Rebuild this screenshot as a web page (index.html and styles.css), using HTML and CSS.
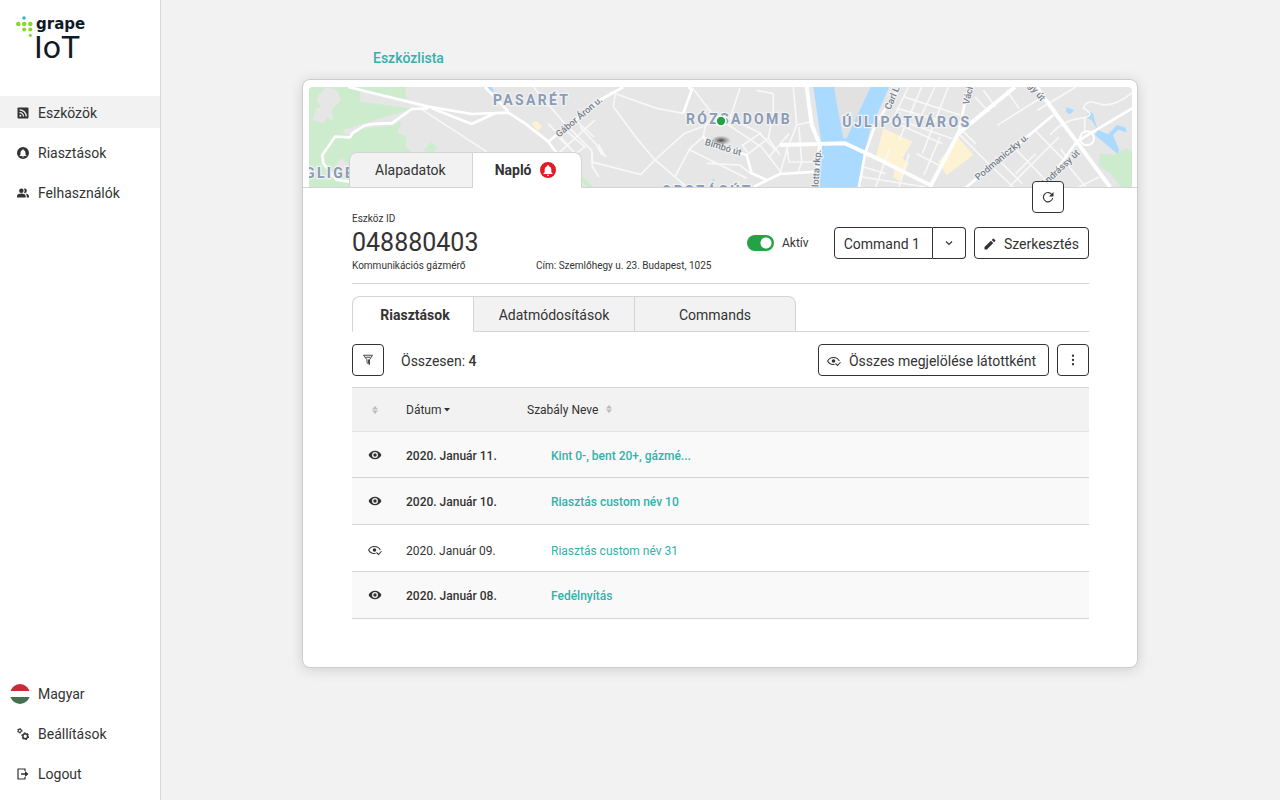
FILE: index.html
```html
<!DOCTYPE html>
<html lang="hu">
<head>
    <meta charset="UTF-8">
    <meta name="viewport" content="width=device-width, initial-scale=1.0">
    <title>Grape IoT - Napló</title>
    <link rel="stylesheet" href="styles.css">
</head>
<body>
    <svg class="sprite" aria-hidden="true">
        <symbol id="i-eye" viewBox="-1 3 26 18">
            <path fill-rule="evenodd" d="M12 4C6.500 4 2 7.500 0 12c2 4.500 6.500 8 12 8s10-3.500 12-8c-2-4.500-6.500-8-12-8zm0 13.500a5.500 5.500 0 1 1 0-11 5.500 5.500 0 0 1 0 11zm0-8.700a3.200 3.200 0 1 0 0 6.400 3.200 3.200 0 0 0 0-6.400z"/>
        </symbol>
        <symbol id="i-seen" viewBox="0 0 28 24">
            <path d="M15 18.500c-1 .3-2 .4-3 .4-4.500 0-8.500-2.600-10.700-6.900C3.500 7.700 7.500 5 13 5s9.500 2.700 11.700 7" fill="none" stroke="currentColor" stroke-width="2.200"/>
            <circle cx="13" cy="12" r="3.600"/>
            <path d="M17 17l4 4 6-6.500" fill="none" stroke="currentColor" stroke-width="2.200"/>
        </symbol>
        <symbol id="i-bell" viewBox="0 0 24 24">
            <path fill-rule="evenodd" d="M12 0a12 12 0 1 0 0 24 12 12 0 0 0 0-24zm0 4.500c.8 0 1.400.6 1.400 1.400v.4c2.200.6 3.600 2.600 3.600 5v4l1.800 1.800v.9H5.200v-.9L7 15.300v-4c0-2.400 1.400-4.400 3.600-5v-.4c0-.8.6-1.400 1.400-1.400zm-1.800 14.500h3.600a1.800 1.800 0 0 1-3.600 0z"/>
        </symbol>
        <symbol id="i-sort" viewBox="0 0 8 10">
            <path d="M4 1l3 3.500H1zM4 9L1 5.500h6z"/>
        </symbol>
    </svg>

    <div class="layout">
        <aside class="sidebar">
            <svg class="logo" viewBox="0 0 72 46" role="img" aria-label="grape IoT">
                <circle cx="8" cy="2" r="1.800" fill="#2dbdb6"/>
                <g fill="#8bd52f">
                    <circle cx="2.300" cy="8" r="2.300"/>
                    <circle cx="8.200" cy="8" r="2.300"/>
                    <circle cx="14.300" cy="8" r="2.300"/>
                    <circle cx="8.200" cy="13.500" r="2"/>
                    <circle cx="14.300" cy="13.500" r="2"/>
                    <circle cx="14.300" cy="19.300" r="1.600"/>
                </g>
                <text class="logo-grape" x="20" y="13">grape</text>
                <text class="logo-iot" x="18" y="42">IoT</text>
            </svg>

            <nav class="menu">
                <a href="#" class="menu-item active">
                    <svg class="menu-icon" viewBox="0 0 24 24"><path d="M3 1h18a2 2 0 0 1 2 2v18a2 2 0 0 1-2 2H3a2 2 0 0 1-2-2V3a2 2 0 0 1 2-2z"/><g fill="none" stroke="#f2f2f2" stroke-width="2.500"><path d="M5 5.500A13.500 13.500 0 0 1 18.500 19M5 11a8 8 0 0 1 8 8"/></g><circle cx="6.800" cy="17.300" r="2" fill="#f2f2f2"/></svg>
                    Eszközök
                </a>
                <a href="#" class="menu-item">
                    <svg class="menu-icon"><use href="#i-bell"/></svg>
                    Riasztások
                </a>
                <a href="#" class="menu-item">
                    <svg class="menu-icon" viewBox="0 0 24 24"><path d="M16.700 13.100c1.600 1.100 2.800 2.600 2.800 4.600V21H24v-3.300c0-2.700-4.300-4.200-7.300-4.600z"/><circle cx="8.700" cy="7.500" r="4.500"/><path d="M15.200 12a4.500 4.500 0 0 0 0-9c-.5 0-1 .1-1.500.3 1 1.200 1.500 2.600 1.500 4.200s-.5 3-1.500 4.200c.5.2 1 .3 1.500.3z"/><path d="M8.700 13C5.500 13 0 14.600 0 17.800V21h17.400v-3.200C17.400 14.600 11.900 13 8.700 13z"/></svg>
                    Felhasználók
                </a>
            </nav>

            <nav class="menu menu-bottom">
                <a href="#" class="menu-item">
                    <svg class="flag" viewBox="0 0 20 20"><clipPath id="round"><circle cx="10" cy="10" r="10"/></clipPath><g clip-path="url(#round)"><path fill="#fff" d="M0 0h20v20H0z"/><path fill="#ce2939" d="M0 0h20v7H0z"/><path fill="#477050" d="M0 13h20v7H0z"/></g></svg>
                    Magyar
                </a>
                <a href="#" class="menu-item">
                    <svg class="menu-icon" viewBox="0 0 24 24"><g fill="none" stroke="currentColor"><circle cx="5.500" cy="5.500" r="3.200" stroke-width="2.200"/><circle cx="5.500" cy="5.500" r="4.800" stroke-width="1.400" stroke-dasharray="2.500 2.500"/><circle cx="16.500" cy="16.500" r="4.800" stroke-width="3"/><circle cx="16.500" cy="16.500" r="7" stroke-width="2" stroke-dasharray="3.700 3.600"/></g></svg>
                    Beállítások
                </a>
                <a href="#" class="menu-item">
                    <svg class="menu-icon" viewBox="0 0 24 24"><path d="M16 6V2H2v20h14v-4" fill="none" stroke="currentColor" stroke-width="2.400"/><path d="M8 10.500h8V6l7 6-7 6v-4.500H8z"/></svg>
                    Logout
                </a>
            </nav>
        </aside>

        <main class="content">
            <div class="page">
                <a href="#" class="back-link">Eszközlista</a>

                <section class="card">
                    <header class="card-header">
                        <svg class="map" viewBox="0 0 2469 300" preserveAspectRatio="xMidYMid slice" role="img" aria-label="Térkép">
                            <defs>
                                <radialGradient id="pin-shadow">
                                    <stop offset="0" stop-color="#333" stop-opacity=".9"/>
                                    <stop offset="1" stop-color="#666" stop-opacity="0"/>
                                </radialGradient>
                            </defs>
                            <rect width="2469" height="300" fill="#e6e6e6"/>

                            <!-- parks -->
                            <g fill="#cdeccd">
                                <path d="M0 0H290V52L305 64 260 95 278 112 265 135 293 150 288 180 310 195V300H0z"/>
                                <path d="M343 189L366 166 386 184 363 204z"/>
                                <path d="M813 262L853 300H835L813 282z"/>
                                <path d="M2373 199L2413 204 2453 184 2469 194V300H2435L2403 259 2370 238z"/>
                            </g>
                            <g fill="#e6e6e6">
                                <path d="M154 9L290 39 303 64 154 44z"/>
                                <path d="M103 129L198 99 298 69 258 115 158 125 130 145 105 140z"/>
                                <path d="M28 24L53 1 83 9 96 39 68 69 73 99 53 94 43 109 10 99 23 64 36 59 23 39z"/>
                                <path d="M76 239L98 214 120 234V260H80z"/>
                            </g>
                            <g fill="#fdf3d3">
                                <path d="M668 109L683 102 700 119 686 131z"/>
                                <path d="M1948 152L1993 204 1913 264 1888 224z"/>
                                <path d="M1723 124L1810 164 1780 214 1800 230 1770 282 1753 270 1758 240 1700 214z"/>
                            </g>

                            <!-- water -->
                            <g fill="#aadaff">
                                <path d="M1513 0L1535 154 1532 300H1648L1665 204 1683 130 1741 0z"/>
                                <path d="M2273 61L2295 69 2283 82 2271 74z"/>
                                <path d="M2338 74L2351 79 2366 129 2398 142 2423 114 2450 122 2452 136 2428 128 2412 144 2431 190 2425 200 2358 144 2366 128 2347 98 2334 94z"/>
                                <path d="M535 0H548L556 14 548 14z"/>
                            </g>
                            <path d="M1575 0L1585 60 1603 154H1613L1685 0z" fill="#e1e1e1"/>
                            <path d="M1211 277L1221 286" stroke="#aadaff" stroke-width="4"/>

                            <!-- side streets -->
                            <g fill="none" stroke="#f8f8f8" stroke-width="5">
                                <path d="M338 67L533 194M673 0L758 99 848 190 850 240 870 270M718 110L790 190M748 199L858 99M770 130L828 180 800 200M800 100L855 150M748 150L800 200"/>
                                <path d="M903 14L1043 64 1123 79M918 24L913 59 983 154 1038 219 1133 300M1038 219L995 263 850 225 850 195M813 120L860 170 880 205 868 180 890 210 868 172M1038 219L1125 140 1183 118"/>
                                <path d="M1098 269L1143 184 1183 149 1188 119 1213 84M1148 0L1213 84 1358 180 1420 260M1143 189L1313 274M1193 229L1293 234 1328 262M1293 4L1263 94 1358 140M1343 10L1393 20V80L1378 154 1413 204"/>
                                <path d="M1378 154L1318 200 1300 175 1353 140 1400 190M1453 0L1463 114 1433 190 1413 260M1463 114L1508 104M1433 174L1440 225 1520 225M1470 120L1478 225 1465 260M1380 210L1440 140"/>
                                <path d="M1798 0L1753 94M1838 0L1770 160M1878 0L1820 120M1918 0L1840 200M1783 29L1953 84M1763 64L1943 114M1773 100L1930 155M1720 90L1900 170M1823 200L1900 240M1893 150L1845 264M1673 205L1740 225M1665 240L1730 260M1660 270L1850 300M1740 190L1700 300M1800 200L1770 300"/>
                                <path d="M1948 139L2043 234 2113 300M1963 134L2000 170M2065 115L2203 28M2093 10L2130 64M2023 10L2060 60M1998 30L2040 75M2300 0L2185 70M2178 130L2260 214 2330 300M2108 174L2220 290M2060 210L2140 290M2255 185L2290 235M2120 260L2180 200M2310 300L2370 270M2100 300L2250 150"/>
                                <path d="M2223 144Q2260 100 2313 94T2323 64Q2330 35 2370 50T2469 18M2328 90Q2325 130 2330 140"/>
                            </g>

                            <!-- main roads -->
                            <g fill="none" stroke="#fff" stroke-width="8" stroke-linejoin="round">
                                <path d="M118 0L358 59 488 81 598 77 648 109 718 164 748 205M528 0L598 74M368 64L488 111 558 79"/>
                                <path d="M358 64L308 66 248 109Q170 108 158 121L131 138 123 151 78 149 40 204 43 229 83 279 123 284"/>
                                <path d="M718 164L858 50 873 39 943 0M1138 0L1148 9 1123 79M1183 149L1200 170 1313 204 1328 259 1373 279"/>
                                <path d="M1333 300L1413 261 1523 254M1773 0L1700 110 1668 200 1650 300M1978 0L1948 139"/>
                                <path d="M1963 308L2233 84M2203 304L2303 164 2469 64"/>
                                <circle cx="2334" cy="154" r="21" stroke-width="6"/>
                            </g>
                            <g fill="none" stroke="#fff" stroke-width="12" stroke-linejoin="round">
                                <path d="M1493 0L1508 114 1533 174 1520 300M1413 174L1608 169 1683 204 1863 294M2118 0L1948 139 1863 300M2183 0L2243 84 2303 164 2403 300"/>
                            </g>

                            <g class="district">
                                <text x="-12" y="274">GLIGET</text>
                                <text x="552" y="54">PASARÉT</text>
                                <text x="1131" y="112">RÓZSADOMB</text>
                                <text x="1058" y="326">ORSZÁGÚT</text>
                                <text x="1600" y="121">ÚJLIPÓTVÁROS</text>
                            </g>
                            <g class="street">
                                <text transform="translate(750 152) rotate(-40)">Gábor Áron u.</text>
                                <text transform="translate(1186 173) rotate(17)">Bimbó út</text>
                                <text transform="translate(1536 189) rotate(-86)" text-anchor="end">Sarolotta rkp.</text>
                                <text transform="translate(1744 70) rotate(-67)">Carl Lutz</text>
                                <text transform="translate(1980 54) rotate(-77)">Váci út</text>
                                <text transform="translate(2196 44) rotate(50)" text-anchor="end">Nagy út</text>
                                <text transform="translate(2008 281) rotate(-40)">Podmaniczky u.</text>
                                <text transform="translate(2314 200) rotate(-43)" text-anchor="end">Andrássy út</text>
                            </g>

                            <ellipse cx="1236" cy="160" rx="30" ry="14" fill="url(#pin-shadow)"/>
                            <circle cx="1236" cy="102" r="15" fill="#25a244" stroke="#fff" stroke-width="5"/>
                        </svg>

                        <div class="tabs header-tabs" role="tablist">
                            <button type="button" class="tab" role="tab">Alapadatok</button>
                            <button type="button" class="tab selected" role="tab" aria-selected="true">
                                Napló
                                <svg class="alert"><use href="#i-bell"/></svg>
                            </button>
                        </div>
                        <button type="button" class="btn btn-square refresh" aria-label="Frissítés">
                            <svg class="icon" viewBox="0 0 24 24"><path d="M20 7.500A9.300 9.300 0 1 0 21.300 14" fill="none" stroke="currentColor" stroke-width="2.200"/><path d="M23 2v9h-9z"/></svg>
                        </button>
                    </header>

                    <div class="card-body">
                        <div class="device">
                            <div class="device-info">
                                <div class="small">Eszköz ID</div>
                                <h1 class="device-id">048880403</h1>
                                <div class="small device-meta">
                                    <span>Kommunikációs gázmérő</span>
                                    <span>Cím: Szemlőhegy u. 23. Budapest, 1025</span>
                                </div>
                            </div>
                            <label class="switch">
                                <input type="checkbox" checked>
                                Aktív
                            </label>
                            <div class="split">
                                <button type="button" class="btn split-main">Command 1</button>
                                <button type="button" class="btn btn-square split-more" aria-label="Parancsok">
                                    <svg class="icon" viewBox="0 0 24 24"><path d="M6 9l6 6 6-6" fill="none" stroke="currentColor" stroke-width="2.400"/></svg>
                                </button>
                            </div>
                            <button type="button" class="btn">
                                <svg class="icon" viewBox="0 0 24 24"><path d="M1 18.200V23h4.800L18.600 10.200l-4.800-4.800zM22.600 6.200a1.300 1.300 0 0 0 0-1.800l-3-3a1.300 1.300 0 0 0-1.800 0l-2.400 2.400 4.800 4.800z"/></svg>
                                Szerkesztés
                            </button>
                        </div>

                        <div class="tabs log-tabs" role="tablist">
                            <button type="button" class="tab selected" role="tab" aria-selected="true">Riasztások</button>
                            <button type="button" class="tab" role="tab">Adatmódosítások</button>
                            <button type="button" class="tab" role="tab">Commands</button>
                        </div>

                        <div class="toolbar">
                            <button type="button" class="btn btn-square" aria-label="Szűrés">
                                <svg class="icon" viewBox="0 0 24 24"><path d="M3 2.500h18l-6 9V21l-5-3.500v-6zM7 6.500h10M13 11v7" fill="none" stroke="currentColor" stroke-width="1.800"/></svg>
                            </button>
                            <div class="total">Összesen: <strong>4</strong></div>
                            <button type="button" class="btn mark-all">
                                <svg class="icon icon-eye"><use href="#i-seen"/></svg>
                                Összes megjelölése látottként
                            </button>
                            <button type="button" class="btn btn-square" aria-label="Továbbiak">
                                <svg class="icon" viewBox="0 0 24 24"><circle cx="12" cy="3.500" r="2.300"/><circle cx="12" cy="12" r="2.300"/><circle cx="12" cy="20.500" r="2.300"/></svg>
                            </button>
                        </div>

                        <table class="log">
                            <thead>
                                <tr>
                                    <th class="col-state"><svg class="sort"><use href="#i-sort"/></svg></th>
                                    <th class="col-date">Dátum <svg class="caret" viewBox="0 0 6 4"><path d="M0 0h6L3 3.500z"/></svg></th>
                                    <th>Szabály Neve <svg class="sort sort-name"><use href="#i-sort"/></svg></th>
                                </tr>
                            </thead>
                            <tbody>
                                <tr class="unread">
                                    <td class="col-state"><svg class="icon-eye"><use href="#i-eye"/></svg></td>
                                    <td>2020. Január 11.</td>
                                    <td class="rule"><a href="#">Kint 0-, bent 20+, gázmé...</a></td>
                                </tr>
                                <tr class="unread">
                                    <td class="col-state"><svg class="icon-eye"><use href="#i-eye"/></svg></td>
                                    <td>2020. Január 10.</td>
                                    <td class="rule"><a href="#">Riasztás custom név 10</a></td>
                                </tr>
                                <tr class="read">
                                    <td class="col-state"><svg class="icon-eye"><use href="#i-seen"/></svg></td>
                                    <td>2020. Január 09.</td>
                                    <td class="rule"><a href="#">Riasztás custom név 31</a></td>
                                </tr>
                                <tr class="unread">
                                    <td class="col-state"><svg class="icon-eye"><use href="#i-eye"/></svg></td>
                                    <td>2020. Január 08.</td>
                                    <td class="rule"><a href="#">Fedélnyítás</a></td>
                                </tr>
                            </tbody>
                        </table>
                    </div>
                </section>
            </div>
        </main>
    </div>
</body>
</html>
```
FILE: styles.css
```css
* {
    margin: 0;
    padding: 0;
    box-sizing: border-box;
}

body {
    font-family: Roboto, Arial, sans-serif;
    font-size: 14px;
    color: #333;
    background: #f2f2f2;
}

a {
    color: #35b0ab;
    text-decoration: none;
}

button {
    font: inherit;
    color: inherit;
    cursor: pointer;
}

svg {
    fill: currentColor;
    flex-shrink: 0;
}

.sprite {
    display: none;
}

.layout {
    display: flex;
    min-height: 100vh;
}

/* sidebar */
.sidebar {
    display: flex;
    flex-direction: column;
    width: 161px;
    flex-shrink: 0;
    padding: 16px 0 11px;
    background: #fff;
    border-right: 1px solid #d8d8d8;
}

.logo {
    width: 72px;
    height: 46px;
    margin: 0 0 34px 16px;
    overflow: visible;
}

.logo-grape {
    font: bold 15px "DejaVu Sans", sans-serif;
    fill: #111a26;
}

.logo-iot {
    font: 400 32px Roboto, sans-serif;
    fill: #111a26;
}

.menu {
    display: flex;
    flex-direction: column;
    gap: 8px;
}

.menu-bottom {
    margin-top: auto;
}

.menu-item {
    display: flex;
    align-items: center;
    gap: 8px;
    height: 32px;
    padding: 2px 0 0 10px;
    color: #333;
}

.menu-item.active {
    background: #f2f2f2;
}

.menu-icon {
    width: 12px;
    height: 12px;
    margin: 0 1px 0 7px;
}

.flag {
    width: 20px;
    height: 20px;
}

/* page */
.content {
    flex: 1;
    padding: 48px 25px 48px 24px;
}

.page {
    max-width: 836px;
    margin: 0 auto;
}

.back-link {
    display: block;
    width: fit-content;
    margin: 0 0 11px 71px;
    line-height: 20px;
    font-weight: 500;
}

.card {
    background: #fff;
    border: 1px solid #ccc;
    border-radius: 8px;
    box-shadow: 0 2px 14px rgba(0, 0, 0, 0.14);
}

.card-header {
    position: relative;
    padding: 7px 5px 0 6px;
    border-bottom: 1px solid #d4d4d4;
}

.map {
    display: block;
    width: 100%;
    height: 100px;
    border-radius: 4px 4px 0 0;
}

.district {
    font-size: 42px;
    font-weight: 700;
    letter-spacing: 7px;
    fill: #8a9bb5;
    stroke: #f2f2f2;
    stroke-width: 8px;
    paint-order: stroke;
}

.street {
    font-size: 28px;
    font-weight: 500;
    fill: #76808c;
    stroke: #f2f2f2;
    stroke-width: 6px;
    paint-order: stroke;
}

/* tabs */
.tabs {
    display: flex;
}

.tab {
    display: flex;
    align-items: center;
    justify-content: center;
    gap: 8px;
    height: 36px;
    background: #f2f2f2;
    border: 1px solid #d4d4d4;
    border-left-width: 0;
}

.tab:first-child {
    border-left-width: 1px;
    border-top-left-radius: 8px;
}

.tab:last-child {
    border-top-right-radius: 8px;
}

.tab.selected {
    background: #fff;
    border-bottom-color: #fff;
    font-weight: 700;
}

.header-tabs {
    position: absolute;
    left: 46px;
    bottom: -1px;
}

.header-tabs .tab {
    padding: 0 26px 0 25px;
}

.header-tabs .tab.selected {
    padding: 0 25px 0 22px;
}

.alert {
    width: 16px;
    height: 16px;
    color: #e01b24;
}

.refresh {
    position: absolute;
    right: 73px;
    bottom: -26px;
}

.card-body {
    padding: 25px 48px 48px 49px;
}

/* buttons */
.btn {
    display: flex;
    align-items: center;
    justify-content: center;
    gap: 8px;
    height: 32px;
    padding: 2px 9px 0;
    background: #fff;
    border: 1px solid #333;
    border-radius: 4px;
}

.btn-square {
    width: 32px;
    padding: 0;
}

.icon {
    width: 12px;
    height: 12px;
}

.icon-eye {
    width: 14px;
    height: 12px;
}

.split {
    display: flex;
}

.split-main {
    padding: 2px 12px 0 9px;
    border-radius: 4px 0 0 4px;
}

.split-more {
    width: 33px;
    border-left: 0;
    border-radius: 0 4px 4px 0;
}

/* device */
.device {
    display: flex;
    align-items: center;
    gap: 8px;
    padding-bottom: 11px;
    border-bottom: 1px solid #d4d4d4;
}

.device-info {
    flex: 1;
}

.small {
    font-size: 10px;
    line-height: 12px;
}

.device-id {
    font-size: 25px;
    line-height: 35px;
    font-weight: 400;
}

.device-meta {
    display: grid;
    grid-template-columns: 184px 1fr;
}

.switch {
    display: flex;
    align-items: center;
    gap: 8px;
    margin-right: 17px;
    font-size: 12px;
}

.switch input {
    appearance: none;
    width: 27px;
    height: 16px;
    border-radius: 8px;
    background: radial-gradient(circle at 19px 8px, #fff 5px, #25a244 6px);
}

.log-tabs {
    margin-top: 12px;
    border-bottom: 1px solid #d4d4d4;
    height: 36px;
}

.log-tabs .tab {
    width: 161px;
    padding-top: 2px;
}

.log-tabs .tab:first-child {
    width: 122px;
    padding-left: 4px;
}

.toolbar {
    display: flex;
    align-items: center;
    gap: 8px;
    margin: 12px 0 11px;
}

.total {
    margin-left: 9px;
    padding-top: 2px;
}

.total strong {
    font-weight: 500;
}

.mark-all {
    margin-left: auto;
    padding: 2px 12px 0 8px;
}

/* log table */
.log {
    width: 100%;
    border-collapse: separate;
    border-spacing: 0;
    table-layout: fixed;
    font-size: 12px;
    border-top: 1px solid #d4d4d4;
}

.log th,
.log td {
    height: 47px;
    padding: 2px 8px 0;
    text-align: left;
    border-bottom: 1px solid #d4d4d4;
}

.log tr:first-child td {
    height: 46px;
}

.log th {
    height: 44px;
    padding-top: 0;
    font-weight: 400;
    background: #f2f2f2;
    border-bottom-color: #e2e2e2;
}

.log .col-state {
    width: 46px;
    padding-top: 0;
    text-align: center;
}

.log .col-state svg {
    display: block;
    margin: 0 auto;
}

.log .col-date {
    width: 121px;
}

.log .rule {
    padding-left: 32px;
}

.unread td {
    font-weight: 500;
    background: #f9f9f9;
}

/* seen rows sit a little lower */
.log .read td {
    padding-top: 6px;
}

.log .read .col-state {
    padding-top: 4px;
}

.sort {
    width: 8px;
    height: 10px;
    color: #bbb;
}

.sort-name {
    margin-left: 4px;
}

.caret {
    width: 6px;
    height: 4px;
    vertical-align: middle;
}
```
